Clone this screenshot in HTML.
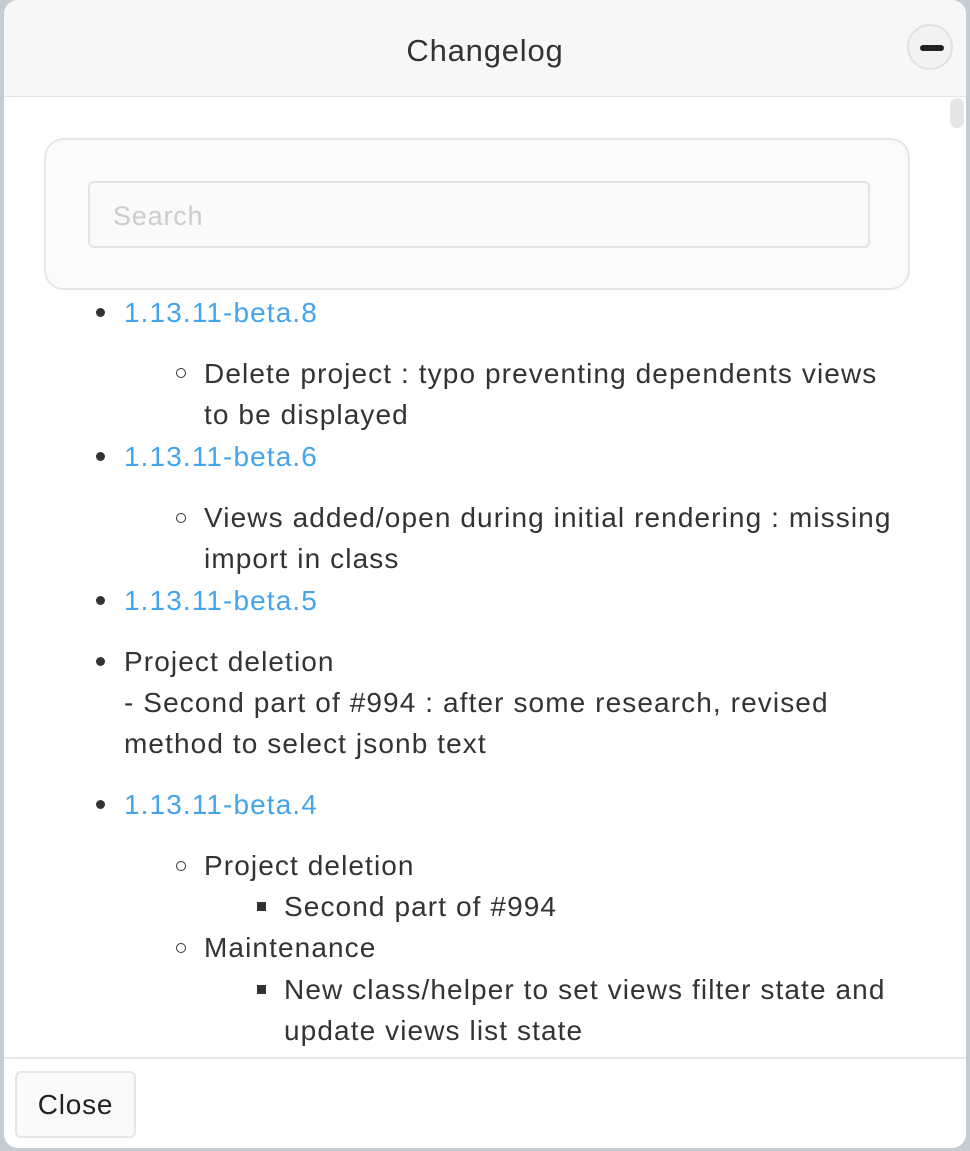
<!DOCTYPE html>
<html><head><meta charset="utf-8"><style>
html,body{margin:0;padding:0;width:970px;height:1151px;overflow:hidden;background:#c4ccd4;font-family:"Liberation Sans",sans-serif;color:#333}
.dlg{position:absolute;left:4px;top:0;width:962px;height:1148px;background:#fff;border-radius:14px;overflow:hidden}
.hdr{position:absolute;left:0;top:0;width:962px;height:96px;background:#f7f7f7;border-bottom:1px solid #e3e3e3}
.title{position:absolute;left:0;width:962px;top:33px;text-align:center;font-size:31px;letter-spacing:0.8px;color:#333}
.min{position:absolute;left:903px;top:24px;width:46px;height:46px;border-radius:50%;border:2px solid #e2e2e2;background:#f3f3f3;box-sizing:border-box}
.min:after{content:"";position:absolute;left:11px;top:19px;width:24px;height:6px;border-radius:3px;background:#222}
.sb{position:absolute;left:946px;top:98px;width:14px;height:30px;border-radius:7px;background:#e6e6e6}
.box{position:absolute;left:40px;top:138px;width:866px;height:152px;border:2px solid #e6e6e6;border-radius:20px;box-sizing:border-box;background:#fbfbfb}
.inp{position:absolute;left:42px;top:41px;width:782px;height:67px;border:2px solid #e3e3e3;border-radius:6px;box-sizing:border-box;background:#fafafa;font-size:27px;letter-spacing:0.8px;color:#ccc;padding:18px 23px}
.t{position:absolute;font-size:28px;letter-spacing:1.1px;white-space:nowrap;line-height:40px;top:0}
.l{color:#45a5ea}
.d{position:absolute;width:9px;height:9px;border-radius:50%;background:#333}
.c{position:absolute;width:8px;height:8px;border-radius:50%;border:1.5px solid #333}
.s{position:absolute;width:9px;height:9px;background:#333}
.ft{position:absolute;left:0;top:1057px;width:962px;height:91px;border-top:2px solid #e8e8e8;background:#fff}
.btn{position:absolute;left:11px;top:12px;width:121px;height:67px;border:2px solid #e6e6e6;border-radius:6px;box-sizing:border-box;background:#fafafa;font-size:28px;letter-spacing:0.8px;text-align:center;line-height:64px;color:#222}
</style></head><body>
<div class="dlg">
<div class="hdr"><div class="title">Changelog</div><div class="min"></div></div>
<div class="sb"></div>
<div class="box"><div class="inp">Search</div></div>
<div class="d" style="left:92px;top:308px"></div><div class="t l" style="left:120px;top:293px">1.13.11-beta.8</div>
<div class="c" style="left:172px;top:368px"></div><div class="t" style="left:200px;top:354px">Delete project : typo preventing dependents views</div>
<div class="t" style="left:200px;top:395px">to be displayed</div>
<div class="d" style="left:92px;top:452px"></div><div class="t l" style="left:120px;top:437px">1.13.11-beta.6</div>
<div class="c" style="left:172px;top:513px"></div><div class="t" style="left:200px;top:498px">Views added/open during initial rendering : missing</div>
<div class="t" style="left:200px;top:539px">import in class</div>
<div class="d" style="left:92px;top:596px"></div><div class="t l" style="left:120px;top:581px">1.13.11-beta.5</div>
<div class="d" style="left:92px;top:657px"></div><div class="t" style="left:120px;top:642px">Project deletion</div>
<div class="t" style="left:120px;top:683px">- Second part of #994 : after some research, revised</div>
<div class="t" style="left:120px;top:724px">method to select jsonb text</div>
<div class="d" style="left:92px;top:800px"></div><div class="t l" style="left:120px;top:785px">1.13.11-beta.4</div>
<div class="c" style="left:172px;top:861px"></div><div class="t" style="left:200px;top:846px">Project deletion</div>
<div class="s" style="left:253px;top:902px"></div><div class="t" style="left:280px;top:887px">Second part of #994</div>
<div class="c" style="left:172px;top:943px"></div><div class="t" style="left:200px;top:928px">Maintenance</div>
<div class="s" style="left:253px;top:985px"></div><div class="t" style="left:280px;top:970px">New class/helper to set views filter state and</div>
<div class="t" style="left:280px;top:1011px">update views list state</div>
<div class="ft"><div class="btn">Close</div></div>
</div>
</body></html>
